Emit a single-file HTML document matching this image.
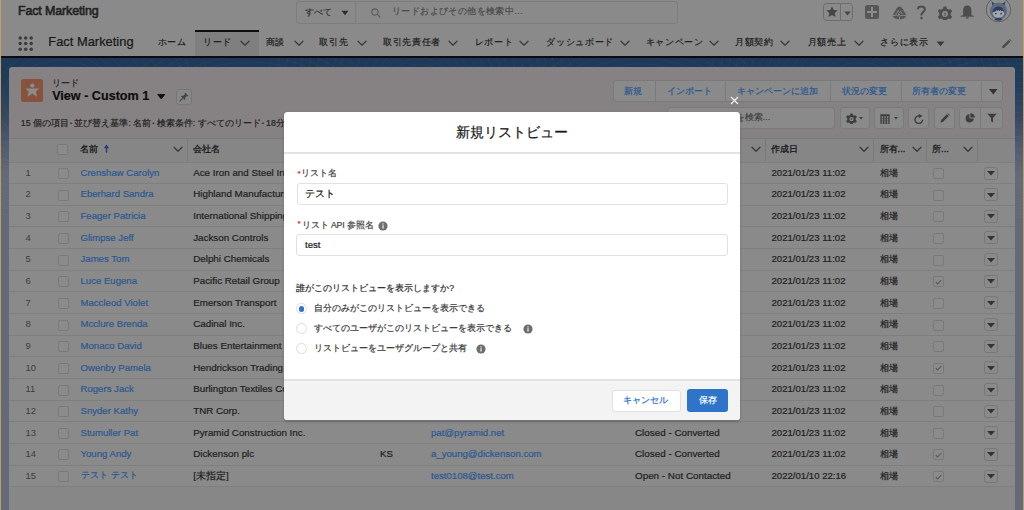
<!DOCTYPE html>
<html lang="ja">
<head>
<meta charset="utf-8">
<style>
*{box-sizing:border-box;margin:0;padding:0}
html,body{width:1024px;height:510px;overflow:hidden}
body{position:relative;background:#8a8a8a;font-family:"Liberation Sans",sans-serif;color:#1c1c1c}
.a{position:absolute}
.t{position:absolute;white-space:nowrap;line-height:1;-webkit-text-stroke:0.2px currentColor}
/* header */
#gh{left:0;top:0;width:1024px;height:28px;background:#8a8a8a}
#nav{left:0;top:28px;width:1024px;height:28px;background:#8a8a8a}
#navline{left:0;top:56px;width:1024px;height:2px;background:#0c0c0c}
#bg{left:0;top:58px;width:1024px;height:452px;background:linear-gradient(#1d3858 0px,#213e5f 30px,#374862 60px,#525c70 90px,#626977 115px,#646a77 452px)}
.edge{top:0;width:1.2px;height:510px;background:#c29c66}
/* card */
#card{left:8.7px;top:67px;width:1006.3px;height:460px;background:#868283;border-radius:3px}
.btng{position:absolute;border:1px solid #7a7a7a;border-radius:3px;background:#8a8a8a}
.sep{position:absolute;top:0;width:1px;height:100%;background:#7a7a7a}
.blue{color:#2b5890}
.row{position:absolute;left:0;width:1005px;height:21.7px;border-top:1px solid #7f7f7f;background:#8a8a8a}
.cb{position:absolute;width:11.2px;height:11px;border:1px solid #797979;border-radius:2px;background:#8b8b8b}
.cell{position:absolute;top:6px;font-size:9.6px;line-height:1;white-space:nowrap}
/* modal */
#modal{left:284px;top:111.5px;width:455.5px;height:308.5px;background:#fff;border-radius:3.5px;overflow:hidden;box-shadow:0 1.5px 3px rgba(0,0,0,0.18)}
</style>
</head>
<body>

<div id="gh" class="a">
 <div class="t" style="left:18px;top:4.5px;font-size:12.4px;color:#222;-webkit-text-stroke:0.6px #222;letter-spacing:-0.1px">Fact Marketing</div>
 <div class="a" style="left:296px;top:1px;width:382px;height:22.5px;border:1px solid #7d7d7d;border-radius:3px"></div>
 <div class="a" style="left:355px;top:1px;width:1px;height:22.5px;background:#7d7d7d"></div>
 <div class="t" style="left:305px;top:7.5px;font-size:9.2px;color:#333">すべて</div>
 <svg class="a" style="left:341px;top:10px" width="8" height="6" viewBox="0 0 8 6"><path d="M0.5 0.8H7.5L4 5.3Z" fill="#2e2e2e"/></svg>
 <svg class="a" style="left:370.5px;top:7.5px" width="10" height="10" viewBox="0 0 10 10"><circle cx="4" cy="4" r="3.1" fill="none" stroke="#5a5a5a" stroke-width="1.1"/><path d="M6.2 6.2L9.3 9.3" stroke="#5a5a5a" stroke-width="1.2"/></svg>
 <div class="t" style="left:392px;top:7.4px;font-size:9.3px;color:#4a4a4a;letter-spacing:0.4px">リードおよびその他を検索中...</div>
 <div class="a" style="left:823px;top:3px;width:30px;height:18px;border:1px solid #6c6c6c;border-radius:3.5px"></div>
 <div class="a" style="left:840px;top:3px;width:1px;height:18px;background:#6c6c6c"></div>
 <svg class="a" style="left:826px;top:5.8px" width="12" height="11.5" viewBox="0 0 24 23"><path d="M12 .6l3.3 7.3 7.9.8-5.9 5.4 1.7 7.8L12 17.9l-7 4 1.7-7.8L.8 8.7l7.9-.8z" fill="#444"/></svg>
 <svg class="a" style="left:843.5px;top:10.5px" width="7" height="5" viewBox="0 0 7 5"><path d="M0.3 0.5H6.7L3.5 4.5Z" fill="#454545"/></svg>
 <div class="a" style="left:865px;top:5px;width:14px;height:14px;background:#575757;border-radius:2.5px"></div>
 <div class="a" style="left:871px;top:7px;width:2px;height:10px;background:#8c8c8c"></div>
 <div class="a" style="left:867px;top:11px;width:10px;height:2px;background:#8c8c8c"></div>
 <svg class="a" style="left:891.5px;top:5.5px" width="15" height="14" viewBox="0 0 15 14"><path d="M7.5 0.5C6 0.5 5.2 1.6 4.3 3L1.3 8C.4 9.6.9 11.6 2.8 12.3c1.5.6 3 .9 4.7.9s3.2-.3 4.7-.9c1.9-.7 2.4-2.7 1.5-4.3L10.7 3C9.8 1.6 9 .5 7.5.5z" fill="#555"/><path d="M1 9.6l3.6-.5 1.4 1 .8-2.6 1.6 2.4 2.2-.6 3.4.5" fill="none" stroke="#8a8a8a" stroke-width="1"/><path d="M4.3 7.6l1.9-3 1.3 2 1.3-1.2 1.6 2.6" fill="none" stroke="#8a8a8a" stroke-width="0.9"/><path d="M7.5 10.4v2.9" stroke="#8a8a8a" stroke-width="0.9"/></svg>
 <svg class="a" style="left:916px;top:5px" width="11" height="14.5" viewBox="0 0 11 14.5"><path d="M1.9 4.3C1.9 2.4 3.4 1.4 5.3 1.4S8.9 2.4 8.9 4.3c0 2.6-3.5 2.6-3.5 5.7v.6" fill="none" stroke="#4d4d4d" stroke-width="2"/><circle cx="5.5" cy="12.9" r="1.25" fill="#4d4d4d"/></svg>
 <svg class="a" style="left:937.5px;top:5.8px" width="14" height="14" viewBox="0 0 14 14"><path d="M5.6.6h2.8l.5 2 1.9 1.1 2-.6 1.4 2.4-1.5 1.5v2.2l1.5 1.5-1.4 2.4-2-.6-1.9 1.1-.5 2H5.6l-.5-2-1.9-1.1-2 .6L-.2 10.7l1.5-1.5V7L-.2 5.5 1.2 3.1l2 .6L5.1 2.6z" fill="#4d4d4d"/><circle cx="7" cy="8.1" r="3" fill="#8a8a8a"/><path d="M7 6.4l.9 1.6h-.5v1.9h-.8V8h-.5z" fill="#4d4d4d"/></svg>
 <svg class="a" style="left:960px;top:5px" width="14.5" height="14" viewBox="0 0 14.5 14"><path d="M7.25.4C4.6.4 3.1 2.4 3.1 5v5.2L.6 10.8v.9h13.3v-.9l-2.5-.6V5C11.4 2.4 9.9.4 7.25.4z" fill="#4d4d4d"/><path d="M5.6 12.3h3.3c0 .8-.7 1.4-1.65 1.4S5.6 13.1 5.6 12.3z" fill="#4d4d4d"/></svg>
 <svg class="a" style="left:985px;top:-3px" width="27" height="26" viewBox="0 0 27 26"><circle cx="13.5" cy="12.6" r="12.2" fill="#8e8e8e" stroke="#5a5a5a" stroke-width="0.9"/><path d="M6.6 4.2L7.4 9.5 10.5 7.2z M20.4 4.2L19.6 9.5 16.5 7.2z" fill="#36455f"/><circle cx="13.5" cy="14" r="8.6" fill="#5b6a83"/><path d="M9.5 22.8c.8-1.6 2.3-2.3 4-2.3s3.2.7 4 2.3c-1.2.7-2.6 1-4 1s-2.8-.3-4-1z" fill="#33425c"/><ellipse cx="13.4" cy="16.2" rx="5.7" ry="4.5" fill="#a3a8ad"/><path d="M7.7 15.4c0-3.3 2.5-5.8 5.7-5.8s5.8 2.5 5.8 5.8c-.7-.9-1.4-1.6-2.1-2l-.6 1.1-.9-1.5-1 1.2-1.1-1.3-.9 1.2-1-1-.8 1.1c-1.1.3-2.2.8-3.1 1.2z" fill="#2e3c54"/><circle cx="10.8" cy="16.6" r="0.85" fill="#2e3c54"/><circle cx="16.1" cy="16.7" r="0.85" fill="#2e3c54"/></svg>
</div>
<div id="nav" class="a">
 <svg class="a" style="left:17.5px;top:7.5px" width="16" height="16" viewBox="0 0 16 16" fill="#3c3c3c"><circle cx="2.2" cy="2" r="1.75"/><circle cx="7.7" cy="2" r="1.75"/><circle cx="13.2" cy="2" r="1.75"/><circle cx="2.2" cy="7.6" r="1.75"/><circle cx="7.7" cy="7.6" r="1.75"/><circle cx="13.2" cy="7.6" r="1.75"/><circle cx="2.2" cy="13.2" r="1.75"/><circle cx="7.7" cy="13.2" r="1.75"/><circle cx="13.2" cy="13.2" r="1.75"/></svg>
 <div class="t" style="left:48.3px;top:7.9px;font-size:12.9px;color:#161616">Fact Marketing</div>
 <div class="a" style="left:194.5px;top:2px;width:64px;height:26px;background:#7f7f7f"></div>
 <div class="a" style="left:194.5px;top:2px;width:64px;height:2px;background:#0e0e0e"></div>
 <div class="t" style="left:157.7px;top:10.4px;font-size:9.2px;color:#1e1e1e;letter-spacing:0.7px">ホーム</div>
 <div class="t" style="left:203.0px;top:10.4px;font-size:9.2px;color:#1e1e1e;letter-spacing:0.7px">リード</div>
 <svg class="a" style="left:239.8px;top:12.2px" width="10" height="6.5" viewBox="0 0 10 6.5"><path d="M1 1.2L5 5.2 9 1.2" fill="none" stroke="#3c3c3c" stroke-width="1.25" stroke-linecap="round" stroke-linejoin="round"/></svg>
 <div class="t" style="left:265.5px;top:10.4px;font-size:9.2px;color:#1e1e1e;letter-spacing:0.7px">商談</div>
 <svg class="a" style="left:293.9px;top:12.2px" width="10" height="6.5" viewBox="0 0 10 6.5"><path d="M1 1.2L5 5.2 9 1.2" fill="none" stroke="#3c3c3c" stroke-width="1.25" stroke-linecap="round" stroke-linejoin="round"/></svg>
 <div class="t" style="left:319.4px;top:10.4px;font-size:9.2px;color:#1e1e1e;letter-spacing:0.7px">取引先</div>
 <svg class="a" style="left:357.3px;top:12.2px" width="10" height="6.5" viewBox="0 0 10 6.5"><path d="M1 1.2L5 5.2 9 1.2" fill="none" stroke="#3c3c3c" stroke-width="1.25" stroke-linecap="round" stroke-linejoin="round"/></svg>
 <div class="t" style="left:382.9px;top:10.4px;font-size:9.2px;color:#1e1e1e;letter-spacing:0.7px">取引先責任者</div>
 <svg class="a" style="left:447.9px;top:12.2px" width="10" height="6.5" viewBox="0 0 10 6.5"><path d="M1 1.2L5 5.2 9 1.2" fill="none" stroke="#3c3c3c" stroke-width="1.25" stroke-linecap="round" stroke-linejoin="round"/></svg>
 <div class="t" style="left:474.7px;top:10.4px;font-size:9.2px;color:#1e1e1e;letter-spacing:0.7px">レポート</div>
 <svg class="a" style="left:519.4px;top:12.2px" width="10" height="6.5" viewBox="0 0 10 6.5"><path d="M1 1.2L5 5.2 9 1.2" fill="none" stroke="#3c3c3c" stroke-width="1.25" stroke-linecap="round" stroke-linejoin="round"/></svg>
 <div class="t" style="left:546.2px;top:10.4px;font-size:9.2px;color:#1e1e1e;letter-spacing:0.7px">ダッシュボード</div>
 <svg class="a" style="left:620.1px;top:12.2px" width="10" height="6.5" viewBox="0 0 10 6.5"><path d="M1 1.2L5 5.2 9 1.2" fill="none" stroke="#3c3c3c" stroke-width="1.25" stroke-linecap="round" stroke-linejoin="round"/></svg>
 <div class="t" style="left:645.7px;top:10.4px;font-size:9.2px;color:#1e1e1e;letter-spacing:0.7px">キャンペーン</div>
 <svg class="a" style="left:708.9px;top:12.2px" width="10" height="6.5" viewBox="0 0 10 6.5"><path d="M1 1.2L5 5.2 9 1.2" fill="none" stroke="#3c3c3c" stroke-width="1.25" stroke-linecap="round" stroke-linejoin="round"/></svg>
 <div class="t" style="left:735.1px;top:10.4px;font-size:9.2px;color:#1e1e1e;letter-spacing:0.7px">月額契約</div>
 <svg class="a" style="left:780.4px;top:12.2px" width="10" height="6.5" viewBox="0 0 10 6.5"><path d="M1 1.2L5 5.2 9 1.2" fill="none" stroke="#3c3c3c" stroke-width="1.25" stroke-linecap="round" stroke-linejoin="round"/></svg>
 <div class="t" style="left:807.7px;top:10.4px;font-size:9.2px;color:#1e1e1e;letter-spacing:0.7px">月額売上</div>
 <svg class="a" style="left:853.7px;top:12.2px" width="10" height="6.5" viewBox="0 0 10 6.5"><path d="M1 1.2L5 5.2 9 1.2" fill="none" stroke="#3c3c3c" stroke-width="1.25" stroke-linecap="round" stroke-linejoin="round"/></svg>
 <div class="t" style="left:880.4px;top:10.4px;font-size:9.2px;color:#1e1e1e;letter-spacing:0.7px">さらに表示</div>
 <svg class="a" style="left:936px;top:13px" width="9" height="6" viewBox="0 0 9 6"><path d="M0.5 0.5H8.5L4.5 5.3Z" fill="#3a3a3a"/></svg>

 <svg class="a" style="left:1001px;top:11px" width="11" height="10" viewBox="0 0 11 10"><path d="M1 9.2l.5-2.2L7.6 1l1.8 1.8L3.3 8.8z" fill="#4a4a4a"/><path d="M8.2.4l.6-.5 1.8 1.8-.5.6z" fill="#4a4a4a"/></svg>
</div>
<div id="navline" class="a"></div>
<div id="bg" class="a"></div>
<svg class="a" style="left:0;top:58px" width="1024" height="160" viewBox="0 0 1024 160"><g fill="none" stroke="rgba(200,215,235,0.06)" stroke-width="0.8"><ellipse cx="60" cy="40" rx="10" ry="8"/><ellipse cx="60" cy="40" rx="18" ry="14"/><ellipse cx="60" cy="40" rx="26" ry="20"/><ellipse cx="60" cy="40" rx="34" ry="26"/><ellipse cx="60" cy="40" rx="42" ry="32"/><ellipse cx="60" cy="40" rx="49" ry="38"/><ellipse cx="60" cy="40" rx="57" ry="44"/><ellipse cx="60" cy="40" rx="65" ry="50"/><ellipse cx="60" cy="40" rx="73" ry="56"/><ellipse cx="60" cy="40" rx="81" ry="62"/><ellipse cx="60" cy="40" rx="88" ry="68"/><ellipse cx="60" cy="40" rx="96" ry="74"/><ellipse cx="60" cy="40" rx="104" ry="80"/><ellipse cx="60" cy="40" rx="112" ry="86"/><ellipse cx="60" cy="40" rx="120" ry="92"/><ellipse cx="60" cy="40" rx="127" ry="98"/><ellipse cx="60" cy="40" rx="135" ry="104"/><ellipse cx="60" cy="40" rx="143" ry="110"/><ellipse cx="60" cy="40" rx="151" ry="116"/><ellipse cx="250" cy="90" rx="10" ry="8"/><ellipse cx="250" cy="90" rx="18" ry="14"/><ellipse cx="250" cy="90" rx="26" ry="20"/><ellipse cx="250" cy="90" rx="34" ry="26"/><ellipse cx="250" cy="90" rx="42" ry="32"/><ellipse cx="250" cy="90" rx="49" ry="38"/><ellipse cx="250" cy="90" rx="57" ry="44"/><ellipse cx="250" cy="90" rx="65" ry="50"/><ellipse cx="250" cy="90" rx="73" ry="56"/><ellipse cx="250" cy="90" rx="81" ry="62"/><ellipse cx="250" cy="90" rx="88" ry="68"/><ellipse cx="250" cy="90" rx="96" ry="74"/><ellipse cx="250" cy="90" rx="104" ry="80"/><ellipse cx="250" cy="90" rx="112" ry="86"/><ellipse cx="250" cy="90" rx="120" ry="92"/><ellipse cx="250" cy="90" rx="127" ry="98"/><ellipse cx="250" cy="90" rx="135" ry="104"/><ellipse cx="250" cy="90" rx="143" ry="110"/><ellipse cx="250" cy="90" rx="151" ry="116"/><ellipse cx="420" cy="20" rx="10" ry="8"/><ellipse cx="420" cy="20" rx="18" ry="14"/><ellipse cx="420" cy="20" rx="26" ry="20"/><ellipse cx="420" cy="20" rx="34" ry="26"/><ellipse cx="420" cy="20" rx="42" ry="32"/><ellipse cx="420" cy="20" rx="49" ry="38"/><ellipse cx="420" cy="20" rx="57" ry="44"/><ellipse cx="420" cy="20" rx="65" ry="50"/><ellipse cx="420" cy="20" rx="73" ry="56"/><ellipse cx="420" cy="20" rx="81" ry="62"/><ellipse cx="420" cy="20" rx="88" ry="68"/><ellipse cx="420" cy="20" rx="96" ry="74"/><ellipse cx="420" cy="20" rx="104" ry="80"/><ellipse cx="420" cy="20" rx="112" ry="86"/><ellipse cx="420" cy="20" rx="120" ry="92"/><ellipse cx="420" cy="20" rx="127" ry="98"/><ellipse cx="420" cy="20" rx="135" ry="104"/><ellipse cx="420" cy="20" rx="143" ry="110"/><ellipse cx="420" cy="20" rx="151" ry="116"/><ellipse cx="640" cy="80" rx="10" ry="8"/><ellipse cx="640" cy="80" rx="18" ry="14"/><ellipse cx="640" cy="80" rx="26" ry="20"/><ellipse cx="640" cy="80" rx="34" ry="26"/><ellipse cx="640" cy="80" rx="42" ry="32"/><ellipse cx="640" cy="80" rx="49" ry="38"/><ellipse cx="640" cy="80" rx="57" ry="44"/><ellipse cx="640" cy="80" rx="65" ry="50"/><ellipse cx="640" cy="80" rx="73" ry="56"/><ellipse cx="640" cy="80" rx="81" ry="62"/><ellipse cx="640" cy="80" rx="88" ry="68"/><ellipse cx="640" cy="80" rx="96" ry="74"/><ellipse cx="640" cy="80" rx="104" ry="80"/><ellipse cx="640" cy="80" rx="112" ry="86"/><ellipse cx="640" cy="80" rx="120" ry="92"/><ellipse cx="640" cy="80" rx="127" ry="98"/><ellipse cx="640" cy="80" rx="135" ry="104"/><ellipse cx="640" cy="80" rx="143" ry="110"/><ellipse cx="640" cy="80" rx="151" ry="116"/><ellipse cx="860" cy="30" rx="10" ry="8"/><ellipse cx="860" cy="30" rx="18" ry="14"/><ellipse cx="860" cy="30" rx="26" ry="20"/><ellipse cx="860" cy="30" rx="34" ry="26"/><ellipse cx="860" cy="30" rx="42" ry="32"/><ellipse cx="860" cy="30" rx="49" ry="38"/><ellipse cx="860" cy="30" rx="57" ry="44"/><ellipse cx="860" cy="30" rx="65" ry="50"/><ellipse cx="860" cy="30" rx="73" ry="56"/><ellipse cx="860" cy="30" rx="81" ry="62"/><ellipse cx="860" cy="30" rx="88" ry="68"/><ellipse cx="860" cy="30" rx="96" ry="74"/><ellipse cx="860" cy="30" rx="104" ry="80"/><ellipse cx="860" cy="30" rx="112" ry="86"/><ellipse cx="860" cy="30" rx="120" ry="92"/><ellipse cx="860" cy="30" rx="127" ry="98"/><ellipse cx="860" cy="30" rx="135" ry="104"/><ellipse cx="860" cy="30" rx="143" ry="110"/><ellipse cx="860" cy="30" rx="151" ry="116"/><ellipse cx="1010" cy="110" rx="10" ry="8"/><ellipse cx="1010" cy="110" rx="18" ry="14"/><ellipse cx="1010" cy="110" rx="26" ry="20"/><ellipse cx="1010" cy="110" rx="34" ry="26"/><ellipse cx="1010" cy="110" rx="42" ry="32"/><ellipse cx="1010" cy="110" rx="49" ry="38"/><ellipse cx="1010" cy="110" rx="57" ry="44"/><ellipse cx="1010" cy="110" rx="65" ry="50"/><ellipse cx="1010" cy="110" rx="73" ry="56"/><ellipse cx="1010" cy="110" rx="81" ry="62"/><ellipse cx="1010" cy="110" rx="88" ry="68"/><ellipse cx="1010" cy="110" rx="96" ry="74"/><ellipse cx="1010" cy="110" rx="104" ry="80"/><ellipse cx="1010" cy="110" rx="112" ry="86"/><ellipse cx="1010" cy="110" rx="120" ry="92"/><ellipse cx="1010" cy="110" rx="127" ry="98"/><ellipse cx="1010" cy="110" rx="135" ry="104"/><ellipse cx="1010" cy="110" rx="143" ry="110"/><ellipse cx="1010" cy="110" rx="151" ry="116"/><ellipse cx="0" cy="200" rx="10" ry="8"/><ellipse cx="0" cy="200" rx="18" ry="14"/><ellipse cx="0" cy="200" rx="26" ry="20"/><ellipse cx="0" cy="200" rx="34" ry="26"/><ellipse cx="0" cy="200" rx="42" ry="32"/><ellipse cx="0" cy="200" rx="49" ry="38"/><ellipse cx="0" cy="200" rx="57" ry="44"/><ellipse cx="0" cy="200" rx="65" ry="50"/><ellipse cx="0" cy="200" rx="73" ry="56"/><ellipse cx="0" cy="200" rx="81" ry="62"/><ellipse cx="0" cy="200" rx="88" ry="68"/><ellipse cx="0" cy="200" rx="96" ry="74"/><ellipse cx="0" cy="200" rx="104" ry="80"/><ellipse cx="0" cy="200" rx="112" ry="86"/><ellipse cx="0" cy="200" rx="120" ry="92"/><ellipse cx="0" cy="200" rx="127" ry="98"/><ellipse cx="0" cy="200" rx="135" ry="104"/><ellipse cx="0" cy="200" rx="143" ry="110"/><ellipse cx="0" cy="200" rx="151" ry="116"/><ellipse cx="1024" cy="260" rx="10" ry="8"/><ellipse cx="1024" cy="260" rx="18" ry="14"/><ellipse cx="1024" cy="260" rx="26" ry="20"/><ellipse cx="1024" cy="260" rx="34" ry="26"/><ellipse cx="1024" cy="260" rx="42" ry="32"/><ellipse cx="1024" cy="260" rx="49" ry="38"/><ellipse cx="1024" cy="260" rx="57" ry="44"/><ellipse cx="1024" cy="260" rx="65" ry="50"/><ellipse cx="1024" cy="260" rx="73" ry="56"/><ellipse cx="1024" cy="260" rx="81" ry="62"/><ellipse cx="1024" cy="260" rx="88" ry="68"/><ellipse cx="1024" cy="260" rx="96" ry="74"/><ellipse cx="1024" cy="260" rx="104" ry="80"/><ellipse cx="1024" cy="260" rx="112" ry="86"/><ellipse cx="1024" cy="260" rx="120" ry="92"/><ellipse cx="1024" cy="260" rx="127" ry="98"/><ellipse cx="1024" cy="260" rx="135" ry="104"/><ellipse cx="1024" cy="260" rx="143" ry="110"/><ellipse cx="1024" cy="260" rx="151" ry="116"/></g></svg>
<div id="card" class="a"></div>
<div id="cardc">
 <div class="a" style="left:20.7px;top:79px;width:22.6px;height:22.6px;background:#87533c;border-radius:2.5px"></div>
 <svg class="a" style="left:20.7px;top:79px" width="23" height="23" viewBox="0 0 23 23"><circle cx="11.3" cy="6.6" r="2.1" fill="#8c8c8c"/><path d="M4.4 9.6H18.2L14.9 12.6 16 17.9 11.3 14.6 6.6 17.9 7.7 12.6Z" fill="#8c8c8c"/></svg>
 <div class="t" style="left:51.5px;top:78.6px;font-size:8.8px;color:#262626;">リード</div>
 <div class="t" style="left:52.2px;top:89.8px;font-size:12.6px;color:#0e0e0e;font-weight:bold">View - Custom 1</div>
 <svg class="a" style="left:156.5px;top:93.8px" width="8.5" height="5.6" viewBox="0 0 8.5 5.6"><path d="M0 0H8.5L4.25 5.6Z" fill="#0d0d0d"/></svg>
 <div class="a" style="left:175.5px;top:88.5px;width:16px;height:16px;border:1px solid #777;border-radius:3px;background:#878787"></div>
 <svg class="a" style="left:178.5px;top:91.5px" width="10" height="10" viewBox="0 0 10 10"><path d="M6 .6L9.4 4 8.4 4.4 7.6 4.1 6.2 5.6 6.3 7.3 5.6 8 2 4.4 2.7 3.7 4.4 3.8 5.9 2.4 5.6 1.6z" fill="#444"/><path d="M3.6 6.4L.7 9.3" stroke="#444" stroke-width="1.1"/></svg>
 <div class="t" style="left:20.8px;top:118.6px;font-size:8.8px;color:#222;">15 個の項目<span style="font-size:6px;position:relative;top:-0.8px;margin:0 2.3px 0 1px">•</span>並び替え基準: 名前<span style="font-size:6px;position:relative;top:-0.8px;margin:0 2.3px 0 1px">•</span>検索条件: すべてのリード<span style="font-size:6px;position:relative;top:-0.8px;margin:0 2.3px 0 1px">•</span>18分前に更新されました</div>
 <div class="btng" style="left:612.9px;top:79.5px;width:390.1px;height:22px"></div>
 <div class="a" style="left:654.9px;top:79.5px;width:1px;height:22px;background:#7a7a7a"></div>
 <div class="a" style="left:725.2px;top:79.5px;width:1px;height:22px;background:#7a7a7a"></div>
 <div class="a" style="left:830.1px;top:79.5px;width:1px;height:22px;background:#7a7a7a"></div>
 <div class="a" style="left:900.8px;top:79.5px;width:1px;height:22px;background:#7a7a7a"></div>
 <div class="a" style="left:980.5px;top:79.5px;width:1px;height:22px;background:#7a7a7a"></div>
 <div class="t" style="left:623.9000000000001px;top:85.6px;font-size:9.4px;color:#2b5890;">新規</div>
 <div class="t" style="left:666.9000000000001px;top:85.6px;font-size:9.4px;color:#2b5890;">インポート</div>
 <div class="t" style="left:736.7px;top:85.6px;font-size:9.4px;color:#2b5890;">キャンペーンに追加</div>
 <div class="t" style="left:841.9000000000001px;top:85.6px;font-size:9.4px;color:#2b5890;">状況の変更</div>
 <div class="t" style="left:911.9000000000001px;top:85.6px;font-size:9.4px;color:#2b5890;">所有者の変更</div>
 <svg class="a" style="left:989px;top:89.3px" width="8.5" height="6" viewBox="0 0 8.5 6"><path d="M0 0H8.5L4.25 5.6Z" fill="#333"/></svg>
 <div class="btng" style="left:666.6px;top:107.4px;width:168.8px;height:21.2px"></div>
 <div class="t" style="left:690.5px;top:112.4px;font-size:9.4px;color:#444;">このリストを検索...</div>
 <div class="btng" style="left:839.8px;top:107.4px;width:29.8px;height:21.2px"></div>
 <div class="btng" style="left:874px;top:107.4px;width:30.0px;height:21.2px"></div>
 <div class="btng" style="left:907.9px;top:107.4px;width:21.1px;height:21.2px"></div>
 <div class="btng" style="left:933.9px;top:107.4px;width:21.4px;height:21.2px"></div>
 <div class="btng" style="left:959px;top:107.4px;width:43.8px;height:21.2px"></div>
 <div class="a" style="left:980px;top:107.4px;width:1px;height:21.2px;background:#7a7a7a"></div>
 <svg class="a" style="left:845.5px;top:113.3px" width="11" height="10.5" viewBox="0 0 14 14"><path d="M5.6.6h2.8l.5 2 1.9 1.1 2-.6 1.4 2.4-1.5 1.5v2.2l1.5 1.5-1.4 2.4-2-.6-1.9 1.1-.5 2H5.6l-.5-2-1.9-1.1-2 .6L-.2 10.7l1.5-1.5V7L-.2 5.5 1.2 3.1l2 .6L5.1 2.6z" fill="#3e3e3e"/><circle cx="7" cy="8.1" r="2.9" fill="#8a8a8a"/><circle cx="7" cy="8.1" r="1.1" fill="#3e3e3e"/></svg>
 <svg class="a" style="left:859px;top:116.5px" width="4" height="3" viewBox="0 0 4 3"><path d="M0 0H4L2 2.6Z" fill="#3e3e3e"/></svg>
 <svg class="a" style="left:880px;top:113.5px" width="10" height="10" viewBox="0 0 10 10"><path d="M.3 .3h9.4v2H.3z" fill="#3e3e3e"/><path d="M1.1 2.3v7.4M3.7 2.3v7.4M6.3 2.3v7.4M8.9 2.3v7.4" stroke="#3e3e3e" stroke-width="1.3"/><path d="M.4 4.6h9.2M.4 6.9h9.2M.4 9.3h9.2" stroke="#3e3e3e" stroke-width="0.5"/></svg>
 <svg class="a" style="left:893.5px;top:116.5px" width="4" height="3" viewBox="0 0 4 3"><path d="M0 0H4L2 2.6Z" fill="#3e3e3e"/></svg>
 <svg class="a" style="left:914px;top:113.5px" width="10" height="10" viewBox="0 0 10 10"><path d="M8.6 5.8A3.8 3.8 0 1 1 5.2 1.9" fill="none" stroke="#3e3e3e" stroke-width="1.4"/><path d="M4.8 -.2L8.6 2 4.8 4.2z" fill="#3e3e3e"/></svg>
 <svg class="a" style="left:939.5px;top:113px" width="10" height="10" viewBox="0 0 10 10"><path d="M.6 9.4l.5-2.3L6.9 1.3 8.7 3.1 2.9 8.9z" fill="#3e3e3e"/><path d="M7.5 .7L8 .2 9.8 2 9.3 2.5z" fill="#3e3e3e"/></svg>
 <svg class="a" style="left:964.5px;top:113px" width="10" height="10" viewBox="0 0 10 10"><path d="M4.4 1.2A4.1 4.1 0 1 0 8.8 5.6H4.4z" fill="#3e3e3e"/><path d="M5.4 .2A4.2 4.2 0 0 1 9.8 4.6H5.4z" fill="#3e3e3e"/></svg>
 <svg class="a" style="left:986.5px;top:113px" width="10" height="10" viewBox="0 0 10 10"><path d="M.3 .8H9.7L6 5V9.5L4 8.3V5z" fill="#3e3e3e"/></svg>
 <div class="a" style="left:8.7px;top:138px;width:1006.3px;height:23.5px;background:#868686;border-top:1px solid #7a7a7a"></div>
 <div class="cb" style="left:57.3px;top:144.00px"></div>
 <div class="t" style="left:80.3px;top:145px;font-size:9.2px;color:#1a1a1a;-webkit-text-stroke:0.3px #1a1a1a">名前</div>
 <svg class="a" style="left:102.5px;top:143.5px" width="7" height="9" viewBox="0 0 7 9"><path d="M3.5 8.7V2.5" stroke="#22406e" stroke-width="1.4"/><path d="M.8 4.2L3.5 .6 6.2 4.2z" fill="#22406e"/></svg>
 <svg class="a" style="left:173.1px;top:146px" width="10" height="6.5" viewBox="0 0 10 6.5"><path d="M1 1.2L5 5.2 9 1.2" fill="none" stroke="#3a3a3a" stroke-width="1.3" stroke-linecap="round" stroke-linejoin="round"/></svg>
 <div class="a" style="left:187.0px;top:139px;width:1px;height:22.5px;background:#7a7a7a"></div>
 <div class="a" style="left:764.8px;top:139px;width:1px;height:22.5px;background:#7a7a7a"></div>
 <div class="a" style="left:873.1px;top:139px;width:1px;height:22.5px;background:#7a7a7a"></div>
 <div class="a" style="left:926.2px;top:139px;width:1px;height:22.5px;background:#7a7a7a"></div>
 <div class="a" style="left:977.0px;top:139px;width:1px;height:22.5px;background:#7a7a7a"></div>
 <div class="t" style="left:193px;top:145px;font-size:9.2px;color:#1a1a1a;-webkit-text-stroke:0.3px #1a1a1a">会社名</div>
 <svg class="a" style="left:750.9px;top:146px" width="10" height="6.5" viewBox="0 0 10 6.5"><path d="M1 1.2L5 5.2 9 1.2" fill="none" stroke="#3a3a3a" stroke-width="1.3" stroke-linecap="round" stroke-linejoin="round"/></svg>
 <div class="t" style="left:771.3px;top:145px;font-size:9.2px;color:#1a1a1a;-webkit-text-stroke:0.3px #1a1a1a">作成日</div>
 <svg class="a" style="left:859.2px;top:146px" width="10" height="6.5" viewBox="0 0 10 6.5"><path d="M1 1.2L5 5.2 9 1.2" fill="none" stroke="#3a3a3a" stroke-width="1.3" stroke-linecap="round" stroke-linejoin="round"/></svg>
 <div class="t" style="left:879.6px;top:145px;font-size:9.2px;color:#1a1a1a;-webkit-text-stroke:0.3px #1a1a1a">所有...</div>
 <svg class="a" style="left:912.3px;top:146px" width="10" height="6.5" viewBox="0 0 10 6.5"><path d="M1 1.2L5 5.2 9 1.2" fill="none" stroke="#3a3a3a" stroke-width="1.3" stroke-linecap="round" stroke-linejoin="round"/></svg>
 <div class="t" style="left:932.1px;top:145px;font-size:9.2px;color:#1a1a1a;-webkit-text-stroke:0.3px #1a1a1a">所...</div>
 <svg class="a" style="left:963.4px;top:146px" width="10" height="6.5" viewBox="0 0 10 6.5"><path d="M1 1.2L5 5.2 9 1.2" fill="none" stroke="#3a3a3a" stroke-width="1.3" stroke-linecap="round" stroke-linejoin="round"/></svg>
 <div class="a" style="left:8.7px;top:161.50px;width:1006.3px;height:21.65px;background:#8a8a8a;border-top:1px solid #7f7f7f"></div>
 <div class="a" style="left:8.7px;top:183.15px;width:1006.3px;height:21.65px;background:#8a8a8a;border-top:1px solid #7f7f7f"></div>
 <div class="a" style="left:8.7px;top:204.80px;width:1006.3px;height:21.65px;background:#8a8a8a;border-top:1px solid #7f7f7f"></div>
 <div class="a" style="left:8.7px;top:226.45px;width:1006.3px;height:21.65px;background:#8a8a8a;border-top:1px solid #7f7f7f"></div>
 <div class="a" style="left:8.7px;top:248.10px;width:1006.3px;height:21.65px;background:#8a8a8a;border-top:1px solid #7f7f7f"></div>
 <div class="a" style="left:8.7px;top:269.75px;width:1006.3px;height:21.65px;background:#8a8a8a;border-top:1px solid #7f7f7f"></div>
 <div class="a" style="left:8.7px;top:291.40px;width:1006.3px;height:21.65px;background:#8a8a8a;border-top:1px solid #7f7f7f"></div>
 <div class="a" style="left:8.7px;top:313.05px;width:1006.3px;height:21.65px;background:#8a8a8a;border-top:1px solid #7f7f7f"></div>
 <div class="a" style="left:8.7px;top:334.70px;width:1006.3px;height:21.65px;background:#8a8a8a;border-top:1px solid #7f7f7f"></div>
 <div class="a" style="left:8.7px;top:356.35px;width:1006.3px;height:21.65px;background:#8a8a8a;border-top:1px solid #7f7f7f"></div>
 <div class="a" style="left:8.7px;top:378.00px;width:1006.3px;height:21.65px;background:#8a8a8a;border-top:1px solid #7f7f7f"></div>
 <div class="a" style="left:8.7px;top:399.65px;width:1006.3px;height:21.65px;background:#8a8a8a;border-top:1px solid #7f7f7f"></div>
 <div class="a" style="left:8.7px;top:421.30px;width:1006.3px;height:21.65px;background:#8a8a8a;border-top:1px solid #7f7f7f"></div>
 <div class="a" style="left:8.7px;top:442.95px;width:1006.3px;height:21.65px;background:#8a8a8a;border-top:1px solid #7f7f7f"></div>
 <div class="a" style="left:8.7px;top:464.60px;width:1006.3px;height:21.65px;background:#8a8a8a;border-top:1px solid #7f7f7f"></div>
 <div class="t" style="left:25.6px;top:167.70px;font-size:9.4px;color:#3c3c3c;-webkit-text-stroke:0">1</div>
 <div class="cb" style="left:57.5px;top:168.00px"></div>
 <div class="t" style="left:80.5px;top:167.7px;font-size:9.6px;color:#2b5890;">Crenshaw Carolyn</div>
 <div class="t" style="left:193.2px;top:167.7px;font-size:9.8px;color:#1e1e1e;">Ace Iron and Steel Inc.</div>
 <div class="t" style="left:771.5px;top:167.7px;font-size:9.6px;color:#1e1e1e;">2021/01/23 11:02</div>
 <div class="t" style="left:879.5px;top:167.7px;font-size:9.4px;color:#1e1e1e;">相場</div>
 <div class="cb" style="left:932.5px;top:168.00px"></div>
 <div class="a" style="left:983.5px;top:166.50px;width:14px;height:13px;border:1px solid #777;border-radius:2.5px;background:#8a8a8a"></div>
 <svg class="a" style="left:986.5px;top:171.00px" width="8" height="5" viewBox="0 0 8 5"><path d="M0 0H8L4 4.6Z" fill="#333"/></svg>
 <div class="t" style="left:25.6px;top:189.35px;font-size:9.4px;color:#3c3c3c;-webkit-text-stroke:0">2</div>
 <div class="cb" style="left:57.5px;top:189.65px"></div>
 <div class="t" style="left:80.5px;top:189.35px;font-size:9.6px;color:#2b5890;">Eberhard Sandra</div>
 <div class="t" style="left:193.2px;top:189.35px;font-size:9.8px;color:#1e1e1e;">Highland Manufacturing Ltd.</div>
 <div class="t" style="left:771.5px;top:189.35px;font-size:9.6px;color:#1e1e1e;">2021/01/23 11:02</div>
 <div class="t" style="left:879.5px;top:189.35px;font-size:9.4px;color:#1e1e1e;">相場</div>
 <div class="cb" style="left:932.5px;top:189.65px"></div>
 <div class="a" style="left:983.5px;top:188.15px;width:14px;height:13px;border:1px solid #777;border-radius:2.5px;background:#8a8a8a"></div>
 <svg class="a" style="left:986.5px;top:192.65px" width="8" height="5" viewBox="0 0 8 5"><path d="M0 0H8L4 4.6Z" fill="#333"/></svg>
 <div class="t" style="left:25.6px;top:211.00px;font-size:9.4px;color:#3c3c3c;-webkit-text-stroke:0">3</div>
 <div class="cb" style="left:57.5px;top:211.30px"></div>
 <div class="t" style="left:80.5px;top:211.0px;font-size:9.6px;color:#2b5890;">Feager Patricia</div>
 <div class="t" style="left:193.2px;top:211.0px;font-size:9.8px;color:#1e1e1e;">International Shipping Co.</div>
 <div class="t" style="left:771.5px;top:211.0px;font-size:9.6px;color:#1e1e1e;">2021/01/23 11:02</div>
 <div class="t" style="left:879.5px;top:211.0px;font-size:9.4px;color:#1e1e1e;">相場</div>
 <div class="cb" style="left:932.5px;top:211.30px"></div>
 <div class="a" style="left:983.5px;top:209.80px;width:14px;height:13px;border:1px solid #777;border-radius:2.5px;background:#8a8a8a"></div>
 <svg class="a" style="left:986.5px;top:214.30px" width="8" height="5" viewBox="0 0 8 5"><path d="M0 0H8L4 4.6Z" fill="#333"/></svg>
 <div class="t" style="left:25.6px;top:232.65px;font-size:9.4px;color:#3c3c3c;-webkit-text-stroke:0">4</div>
 <div class="cb" style="left:57.5px;top:232.95px"></div>
 <div class="t" style="left:80.5px;top:232.64999999999998px;font-size:9.6px;color:#2b5890;">Glimpse Jeff</div>
 <div class="t" style="left:193.2px;top:232.64999999999998px;font-size:9.8px;color:#1e1e1e;">Jackson Controls</div>
 <div class="t" style="left:771.5px;top:232.64999999999998px;font-size:9.6px;color:#1e1e1e;">2021/01/23 11:02</div>
 <div class="t" style="left:879.5px;top:232.64999999999998px;font-size:9.4px;color:#1e1e1e;">相場</div>
 <div class="cb" style="left:932.5px;top:232.95px"></div>
 <div class="a" style="left:983.5px;top:231.45px;width:14px;height:13px;border:1px solid #777;border-radius:2.5px;background:#8a8a8a"></div>
 <svg class="a" style="left:986.5px;top:235.95px" width="8" height="5" viewBox="0 0 8 5"><path d="M0 0H8L4 4.6Z" fill="#333"/></svg>
 <div class="t" style="left:25.6px;top:254.30px;font-size:9.4px;color:#3c3c3c;-webkit-text-stroke:0">5</div>
 <div class="cb" style="left:57.5px;top:254.60px"></div>
 <div class="t" style="left:80.5px;top:254.29999999999998px;font-size:9.6px;color:#2b5890;">James Tom</div>
 <div class="t" style="left:193.2px;top:254.29999999999998px;font-size:9.8px;color:#1e1e1e;">Delphi Chemicals</div>
 <div class="t" style="left:771.5px;top:254.29999999999998px;font-size:9.6px;color:#1e1e1e;">2021/01/23 11:02</div>
 <div class="t" style="left:879.5px;top:254.29999999999998px;font-size:9.4px;color:#1e1e1e;">相場</div>
 <div class="cb" style="left:932.5px;top:254.60px"></div>
 <div class="a" style="left:983.5px;top:253.10px;width:14px;height:13px;border:1px solid #777;border-radius:2.5px;background:#8a8a8a"></div>
 <svg class="a" style="left:986.5px;top:257.60px" width="8" height="5" viewBox="0 0 8 5"><path d="M0 0H8L4 4.6Z" fill="#333"/></svg>
 <div class="t" style="left:25.6px;top:275.95px;font-size:9.4px;color:#3c3c3c;-webkit-text-stroke:0">6</div>
 <div class="cb" style="left:57.5px;top:276.25px"></div>
 <div class="t" style="left:80.5px;top:275.95px;font-size:9.6px;color:#2b5890;">Luce Eugena</div>
 <div class="t" style="left:193.2px;top:275.95px;font-size:9.8px;color:#1e1e1e;">Pacific Retail Group</div>
 <div class="t" style="left:771.5px;top:275.95px;font-size:9.6px;color:#1e1e1e;">2021/01/23 11:02</div>
 <div class="t" style="left:879.5px;top:275.95px;font-size:9.4px;color:#1e1e1e;">相場</div>
 <div class="cb" style="left:932.5px;top:276.25px"></div>
 <svg class="a" style="left:934.5px;top:278.75px" width="7" height="6" viewBox="0 0 7 6"><path d="M.8 3.2L2.7 5 6.2 1" fill="none" stroke="#555" stroke-width="1.1"/></svg>
 <div class="a" style="left:983.5px;top:274.75px;width:14px;height:13px;border:1px solid #777;border-radius:2.5px;background:#8a8a8a"></div>
 <svg class="a" style="left:986.5px;top:279.25px" width="8" height="5" viewBox="0 0 8 5"><path d="M0 0H8L4 4.6Z" fill="#333"/></svg>
 <div class="t" style="left:25.6px;top:297.60px;font-size:9.4px;color:#3c3c3c;-webkit-text-stroke:0">7</div>
 <div class="cb" style="left:57.5px;top:297.90px"></div>
 <div class="t" style="left:80.5px;top:297.59999999999997px;font-size:9.6px;color:#2b5890;">Maccleod Violet</div>
 <div class="t" style="left:193.2px;top:297.59999999999997px;font-size:9.8px;color:#1e1e1e;">Emerson Transport</div>
 <div class="t" style="left:771.5px;top:297.59999999999997px;font-size:9.6px;color:#1e1e1e;">2021/01/23 11:02</div>
 <div class="t" style="left:879.5px;top:297.59999999999997px;font-size:9.4px;color:#1e1e1e;">相場</div>
 <div class="cb" style="left:932.5px;top:297.90px"></div>
 <div class="a" style="left:983.5px;top:296.40px;width:14px;height:13px;border:1px solid #777;border-radius:2.5px;background:#8a8a8a"></div>
 <svg class="a" style="left:986.5px;top:300.90px" width="8" height="5" viewBox="0 0 8 5"><path d="M0 0H8L4 4.6Z" fill="#333"/></svg>
 <div class="t" style="left:25.6px;top:319.25px;font-size:9.4px;color:#3c3c3c;-webkit-text-stroke:0">8</div>
 <div class="cb" style="left:57.5px;top:319.55px"></div>
 <div class="t" style="left:80.5px;top:319.24999999999994px;font-size:9.6px;color:#2b5890;">Mcclure Brenda</div>
 <div class="t" style="left:193.2px;top:319.24999999999994px;font-size:9.8px;color:#1e1e1e;">Cadinal Inc.</div>
 <div class="t" style="left:771.5px;top:319.24999999999994px;font-size:9.6px;color:#1e1e1e;">2021/01/23 11:02</div>
 <div class="t" style="left:879.5px;top:319.24999999999994px;font-size:9.4px;color:#1e1e1e;">相場</div>
 <div class="cb" style="left:932.5px;top:319.55px"></div>
 <div class="a" style="left:983.5px;top:318.05px;width:14px;height:13px;border:1px solid #777;border-radius:2.5px;background:#8a8a8a"></div>
 <svg class="a" style="left:986.5px;top:322.55px" width="8" height="5" viewBox="0 0 8 5"><path d="M0 0H8L4 4.6Z" fill="#333"/></svg>
 <div class="t" style="left:25.6px;top:340.90px;font-size:9.4px;color:#3c3c3c;-webkit-text-stroke:0">9</div>
 <div class="cb" style="left:57.5px;top:341.20px"></div>
 <div class="t" style="left:80.5px;top:340.9px;font-size:9.6px;color:#2b5890;">Monaco David</div>
 <div class="t" style="left:193.2px;top:340.9px;font-size:9.8px;color:#1e1e1e;">Blues Entertainment Corp.</div>
 <div class="t" style="left:771.5px;top:340.9px;font-size:9.6px;color:#1e1e1e;">2021/01/23 11:02</div>
 <div class="t" style="left:879.5px;top:340.9px;font-size:9.4px;color:#1e1e1e;">相場</div>
 <div class="cb" style="left:932.5px;top:341.20px"></div>
 <div class="a" style="left:983.5px;top:339.70px;width:14px;height:13px;border:1px solid #777;border-radius:2.5px;background:#8a8a8a"></div>
 <svg class="a" style="left:986.5px;top:344.20px" width="8" height="5" viewBox="0 0 8 5"><path d="M0 0H8L4 4.6Z" fill="#333"/></svg>
 <div class="t" style="left:25.6px;top:362.55px;font-size:9.4px;color:#3c3c3c;-webkit-text-stroke:0">10</div>
 <div class="cb" style="left:57.5px;top:362.85px"></div>
 <div class="t" style="left:80.5px;top:362.55px;font-size:9.6px;color:#2b5890;">Owenby Pamela</div>
 <div class="t" style="left:193.2px;top:362.55px;font-size:9.8px;color:#1e1e1e;">Hendrickson Trading</div>
 <div class="t" style="left:771.5px;top:362.55px;font-size:9.6px;color:#1e1e1e;">2021/01/23 11:02</div>
 <div class="t" style="left:879.5px;top:362.55px;font-size:9.4px;color:#1e1e1e;">相場</div>
 <div class="cb" style="left:932.5px;top:362.85px"></div>
 <svg class="a" style="left:934.5px;top:365.35px" width="7" height="6" viewBox="0 0 7 6"><path d="M.8 3.2L2.7 5 6.2 1" fill="none" stroke="#555" stroke-width="1.1"/></svg>
 <div class="a" style="left:983.5px;top:361.35px;width:14px;height:13px;border:1px solid #777;border-radius:2.5px;background:#8a8a8a"></div>
 <svg class="a" style="left:986.5px;top:365.85px" width="8" height="5" viewBox="0 0 8 5"><path d="M0 0H8L4 4.6Z" fill="#333"/></svg>
 <div class="t" style="left:25.6px;top:384.20px;font-size:9.4px;color:#3c3c3c;-webkit-text-stroke:0">11</div>
 <div class="cb" style="left:57.5px;top:384.50px"></div>
 <div class="t" style="left:80.5px;top:384.2px;font-size:9.6px;color:#2b5890;">Rogers Jack</div>
 <div class="t" style="left:193.2px;top:384.2px;font-size:9.8px;color:#1e1e1e;">Burlington Textiles Corp of America</div>
 <div class="t" style="left:771.5px;top:384.2px;font-size:9.6px;color:#1e1e1e;">2021/01/23 11:02</div>
 <div class="t" style="left:879.5px;top:384.2px;font-size:9.4px;color:#1e1e1e;">相場</div>
 <div class="cb" style="left:932.5px;top:384.50px"></div>
 <div class="a" style="left:983.5px;top:383.00px;width:14px;height:13px;border:1px solid #777;border-radius:2.5px;background:#8a8a8a"></div>
 <svg class="a" style="left:986.5px;top:387.50px" width="8" height="5" viewBox="0 0 8 5"><path d="M0 0H8L4 4.6Z" fill="#333"/></svg>
 <div class="t" style="left:25.6px;top:405.85px;font-size:9.4px;color:#3c3c3c;-webkit-text-stroke:0">12</div>
 <div class="cb" style="left:57.5px;top:406.15px"></div>
 <div class="t" style="left:80.5px;top:405.84999999999997px;font-size:9.6px;color:#2b5890;">Snyder Kathy</div>
 <div class="t" style="left:193.2px;top:405.84999999999997px;font-size:9.8px;color:#1e1e1e;">TNR Corp.</div>
 <div class="t" style="left:771.5px;top:405.84999999999997px;font-size:9.6px;color:#1e1e1e;">2021/01/23 11:02</div>
 <div class="t" style="left:879.5px;top:405.84999999999997px;font-size:9.4px;color:#1e1e1e;">相場</div>
 <div class="cb" style="left:932.5px;top:406.15px"></div>
 <div class="a" style="left:983.5px;top:404.65px;width:14px;height:13px;border:1px solid #777;border-radius:2.5px;background:#8a8a8a"></div>
 <svg class="a" style="left:986.5px;top:409.15px" width="8" height="5" viewBox="0 0 8 5"><path d="M0 0H8L4 4.6Z" fill="#333"/></svg>
 <div class="t" style="left:25.6px;top:427.50px;font-size:9.4px;color:#3c3c3c;-webkit-text-stroke:0">13</div>
 <div class="cb" style="left:57.5px;top:427.80px"></div>
 <div class="t" style="left:80.5px;top:427.49999999999994px;font-size:9.6px;color:#2b5890;">Stumuller Pat</div>
 <div class="t" style="left:193.2px;top:427.49999999999994px;font-size:9.8px;color:#1e1e1e;">Pyramid Construction Inc.</div>
 <div class="t" style="left:431px;top:427.49999999999994px;font-size:9.6px;color:#2b5890;">pat@pyramid.net</div>
 <div class="t" style="left:635px;top:427.49999999999994px;font-size:9.85px;color:#1e1e1e;">Closed - Converted</div>
 <div class="t" style="left:771.5px;top:427.49999999999994px;font-size:9.6px;color:#1e1e1e;">2021/01/23 11:02</div>
 <div class="t" style="left:879.5px;top:427.49999999999994px;font-size:9.4px;color:#1e1e1e;">相場</div>
 <div class="cb" style="left:932.5px;top:427.80px"></div>
 <div class="a" style="left:983.5px;top:426.30px;width:14px;height:13px;border:1px solid #777;border-radius:2.5px;background:#8a8a8a"></div>
 <svg class="a" style="left:986.5px;top:430.80px" width="8" height="5" viewBox="0 0 8 5"><path d="M0 0H8L4 4.6Z" fill="#333"/></svg>
 <div class="t" style="left:25.6px;top:449.15px;font-size:9.4px;color:#3c3c3c;-webkit-text-stroke:0">14</div>
 <div class="cb" style="left:57.5px;top:449.45px"></div>
 <div class="t" style="left:80.5px;top:449.15px;font-size:9.6px;color:#2b5890;">Young Andy</div>
 <div class="t" style="left:193.2px;top:449.15px;font-size:9.8px;color:#1e1e1e;">Dickenson plc</div>
 <div class="t" style="left:380px;top:449.15px;font-size:9.6px;color:#1e1e1e;">KS</div>
 <div class="t" style="left:431px;top:449.15px;font-size:9.6px;color:#2b5890;">a_young@dickenson.com</div>
 <div class="t" style="left:635px;top:449.15px;font-size:9.85px;color:#1e1e1e;">Closed - Converted</div>
 <div class="t" style="left:771.5px;top:449.15px;font-size:9.6px;color:#1e1e1e;">2021/01/23 11:02</div>
 <div class="t" style="left:879.5px;top:449.15px;font-size:9.4px;color:#1e1e1e;">相場</div>
 <div class="cb" style="left:932.5px;top:449.45px"></div>
 <svg class="a" style="left:934.5px;top:451.95px" width="7" height="6" viewBox="0 0 7 6"><path d="M.8 3.2L2.7 5 6.2 1" fill="none" stroke="#555" stroke-width="1.1"/></svg>
 <div class="a" style="left:983.5px;top:447.95px;width:14px;height:13px;border:1px solid #777;border-radius:2.5px;background:#8a8a8a"></div>
 <svg class="a" style="left:986.5px;top:452.45px" width="8" height="5" viewBox="0 0 8 5"><path d="M0 0H8L4 4.6Z" fill="#333"/></svg>
 <div class="t" style="left:25.6px;top:470.80px;font-size:9.4px;color:#3c3c3c;-webkit-text-stroke:0">15</div>
 <div class="cb" style="left:57.5px;top:471.10px"></div>
 <div class="t" style="left:80.5px;top:470.79999999999995px;font-size:9.2px;letter-spacing:0.2px;color:#2b5890;">テスト テスト</div>
 <div class="t" style="left:193.2px;top:470.79999999999995px;font-size:9.8px;color:#1e1e1e;">[未指定]</div>
 <div class="t" style="left:431px;top:470.79999999999995px;font-size:9.6px;color:#2b5890;">test0108@test.com</div>
 <div class="t" style="left:635px;top:470.79999999999995px;font-size:9.85px;color:#1e1e1e;">Open - Not Contacted</div>
 <div class="t" style="left:771.5px;top:470.79999999999995px;font-size:9.6px;color:#1e1e1e;">2022/01/10 22:16</div>
 <div class="t" style="left:879.5px;top:470.79999999999995px;font-size:9.4px;color:#1e1e1e;">相場</div>
 <div class="cb" style="left:932.5px;top:471.10px"></div>
 <svg class="a" style="left:934.5px;top:473.60px" width="7" height="6" viewBox="0 0 7 6"><path d="M.8 3.2L2.7 5 6.2 1" fill="none" stroke="#555" stroke-width="1.1"/></svg>
 <div class="a" style="left:983.5px;top:469.60px;width:14px;height:13px;border:1px solid #777;border-radius:2.5px;background:#8a8a8a"></div>
 <svg class="a" style="left:986.5px;top:474.10px" width="8" height="5" viewBox="0 0 8 5"><path d="M0 0H8L4 4.6Z" fill="#333"/></svg>
 <div class="a" style="left:8.7px;top:486.25px;width:1006.3px;height:24px;background:#878787;border-top:1px solid #7f7f7f"></div>
</div>
<div id="modal" class="a"></div>
 <div class="a" style="left:284.1px;top:152px;width:455.5px;height:2px;background:#e2e2e2"></div>
 <div class="t" style="left:456px;top:124.8px;font-size:14.2px;color:#181818;">新規リストビュー</div>
 <svg class="a" style="left:729.5px;top:96px" width="9" height="9" viewBox="0 0 9 9"><path d="M1 1L8 8M8 1L1 8" stroke="#f2f2f2" stroke-width="1.25"/></svg>
 <div class="t" style="left:297.4px;top:169.6px;font-size:8px;color:#d42b2b">*</div>
 <div class="t" style="left:301.3px;top:169px;font-size:9px;color:#3e3e3e;">リスト名</div>
 <div class="a" style="left:296.5px;top:182.5px;width:431px;height:22.2px;border:1px solid #e1e1e1;border-radius:3px"></div>
 <div class="t" style="left:304.8px;top:188.5px;font-size:9.6px;color:#181818;">テスト</div>
 <div class="t" style="left:297.4px;top:220.2px;font-size:8px;color:#d42b2b">*</div>
 <div class="t" style="left:301.5px;top:220.8px;font-size:8.6px;color:#3e3e3e;">リスト API 参照名</div>
 <svg class="a" style="left:378.3px;top:220.5px" width="10" height="10" viewBox="0 0 10 10"><circle cx="5" cy="5" r="4.6" fill="#6e6e6e"/><path d="M5 4.2V7.6" stroke="#fff" stroke-width="1.1"/><circle cx="5" cy="2.9" r="0.65" fill="#fff"/></svg>
 <div class="a" style="left:296.3px;top:233.5px;width:431.3px;height:22px;border:1px solid #e1e1e1;border-radius:3px"></div>
 <div class="t" style="left:305px;top:240.3px;font-size:9.6px;color:#181818;">test</div>
 <div class="t" style="left:296px;top:283.8px;font-size:9.2px;color:#2e2e2e;">誰がこのリストビューを表示しますか?</div>
 <div class="a" style="left:295.9px;top:303.4px;width:11px;height:11px;border:1px solid #dedede;border-radius:50%;background:#fff"></div>
 <div class="a" style="left:298.59999999999997px;top:306.09999999999997px;width:5.6px;height:5.6px;border-radius:50%;background:#2b74d0"></div>
 <div class="t" style="left:313.6px;top:304.1px;font-size:9.2px;color:#3a3a3a;">自分のみがこのリストビューを表示できる</div>
 <div class="a" style="left:295.9px;top:323.4px;width:11px;height:11px;border:1px solid #dedede;border-radius:50%;background:#fff"></div>
 <div class="t" style="left:313.6px;top:324.1px;font-size:9.2px;color:#3a3a3a;">すべてのユーザがこのリストビューを表示できる</div>
 <svg class="a" style="left:523.4px;top:324.2px" width="10" height="10" viewBox="0 0 10 10"><circle cx="5" cy="5" r="4.6" fill="#6e6e6e"/><path d="M5 4.2V7.6" stroke="#fff" stroke-width="1.1"/><circle cx="5" cy="2.9" r="0.65" fill="#fff"/></svg>
 <div class="a" style="left:295.9px;top:343.4px;width:11px;height:11px;border:1px solid #dedede;border-radius:50%;background:#fff"></div>
 <div class="t" style="left:313.6px;top:344.1px;font-size:9.2px;color:#3a3a3a;">リストビューをユーザグループと共有</div>
 <svg class="a" style="left:475.8px;top:344.1px" width="10" height="10" viewBox="0 0 10 10"><circle cx="5" cy="5" r="4.6" fill="#6e6e6e"/><path d="M5 4.2V7.6" stroke="#fff" stroke-width="1.1"/><circle cx="5" cy="2.9" r="0.65" fill="#fff"/></svg>
 <div class="a" style="left:284.1px;top:379px;width:455.5px;height:41px;background:#f3f3f3;border-top:2px solid #e2e2e2;border-radius:0 0 3.5px 3.5px"></div>
 <div class="a" style="left:611.9px;top:389.5px;width:68.7px;height:22.1px;background:#fff;border:1px solid #e1e1e1;border-radius:3px"></div>
 <div class="t" style="left:623.2px;top:395.6px;font-size:9.2px;color:#2a6fd0;">キャンセル</div>
 <div class="a" style="left:687.2px;top:388.9px;width:41.1px;height:23px;background:#2e74c9;border-radius:3px"></div>
 <div class="t" style="left:698.5px;top:395.6px;font-size:9.2px;color:#ffffff;">保存</div>
<div class="a edge" style="left:0"></div>
<div class="a edge" style="left:1022.8px"></div>
</body>
</html>
